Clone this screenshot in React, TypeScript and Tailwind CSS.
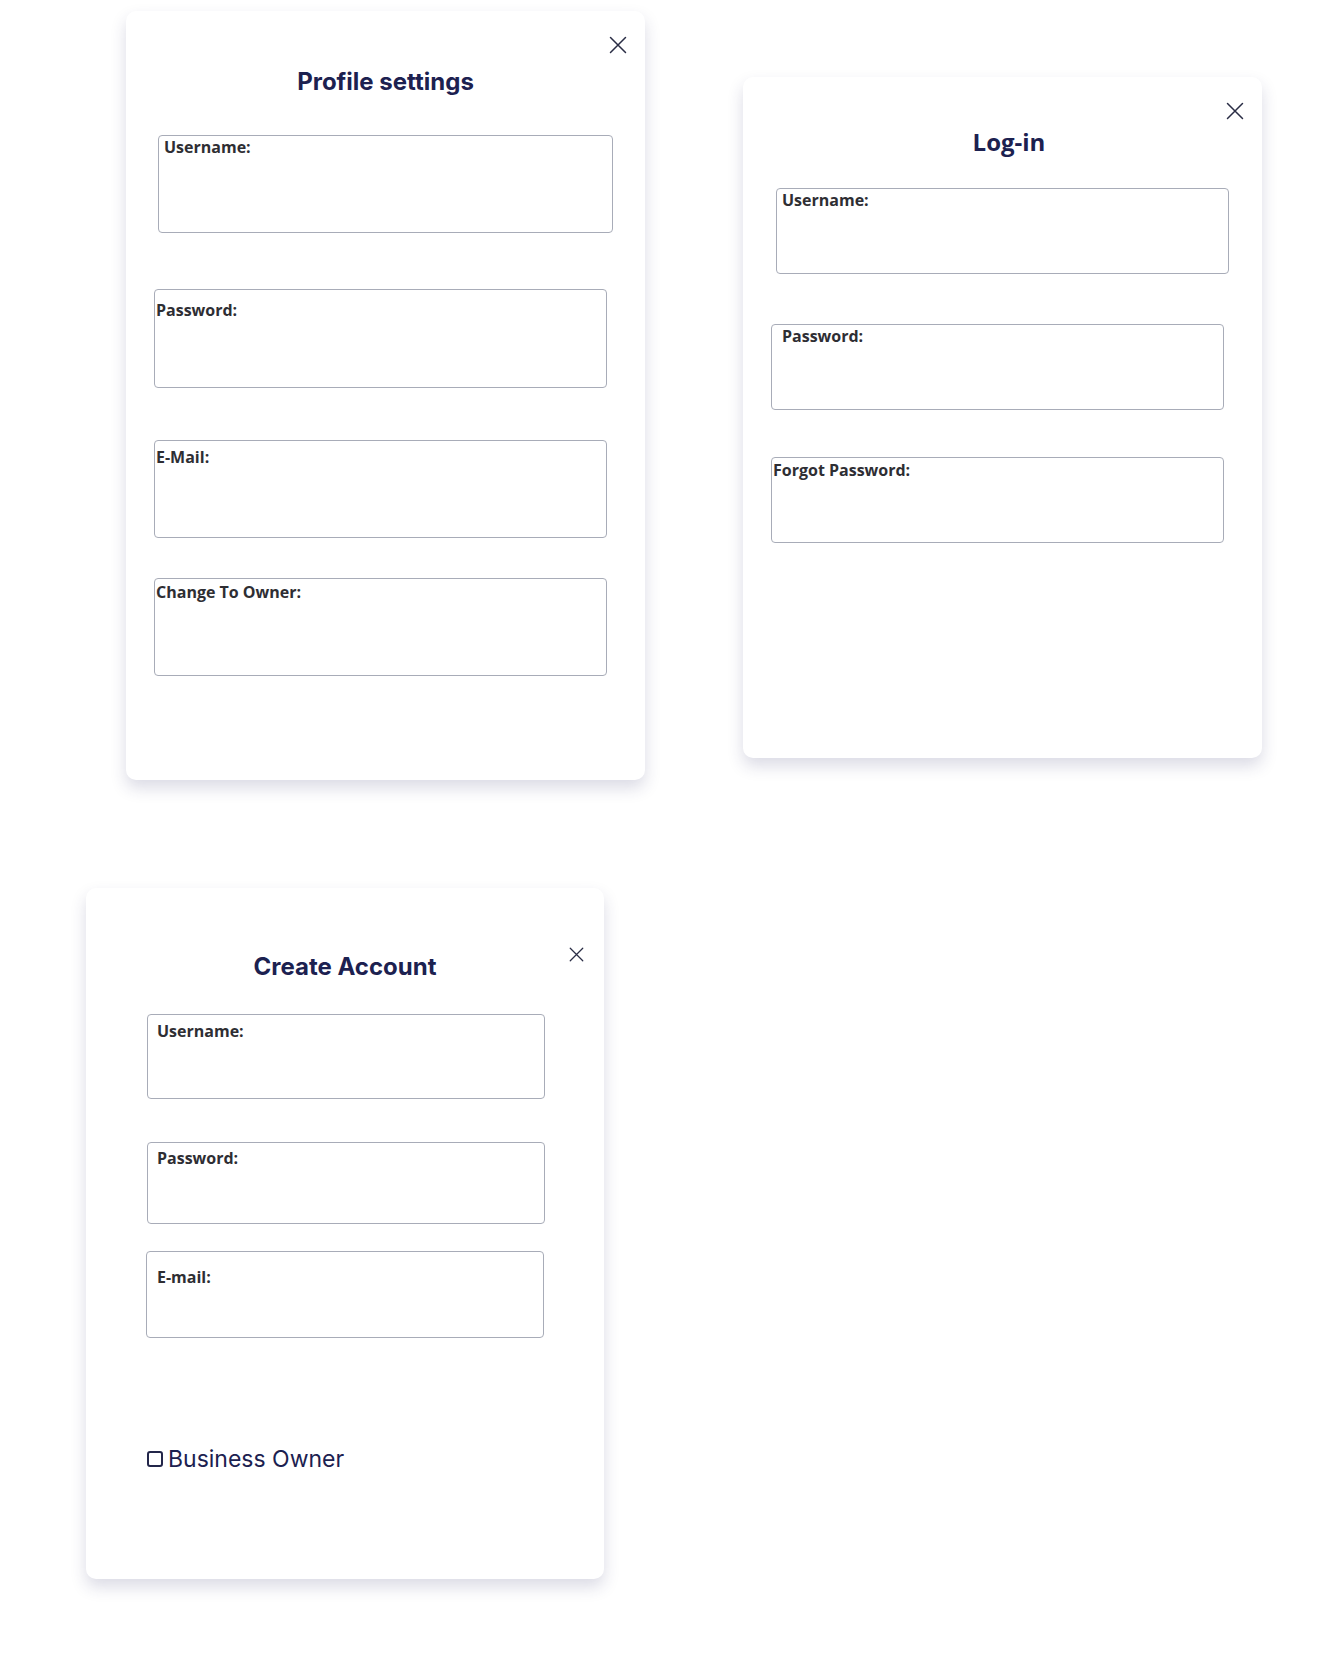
import React from 'react'

const TITLE = 'text-[24px] leading-8 font-bold text-[#1c2150] text-center'
const CARD = 'relative bg-white rounded-[10px] shadow-[0_8px_16px_rgba(40,40,100,0.17)]'

function CloseX({ size = 18 }: { size?: number }) {
  return (
    <svg width={size} height={size} viewBox="0 0 18 18" fill="none" stroke="#2a2d45" strokeWidth="1.5" strokeLinecap="round">
      <path d="M1.5 1.5L16.5 16.5M16.5 1.5L1.5 16.5" />
    </svg>
  )
}

function Field({ label, className, labelClass }: { label: string; className: string; labelClass: string }) {
  return (
    <div className={`border border-[#a8acb8] rounded-[4px] bg-white ${className}`}>
      <p className={`font-['Open_Sans',sans-serif] font-bold text-[16px] leading-5 text-[#2e2e33] ${labelClass}`}>{label}</p>
    </div>
  )
}

function ProfileSettings() {
  return (
    <div className={`${CARD} ml-[126px] mt-[11px] w-[519px] h-[769px] shrink-0 font-['Inter',sans-serif]`}>
      <button className="absolute left-[483px] top-[25px]"><CloseX /></button>
      <h2 className={`${TITLE} pt-[55px]`}>Profile settings</h2>
      <div className="flex flex-col pt-[37px]">
        <Field label="Username:" className="ml-[32px] w-[455px] h-[98px]" labelClass="pl-[5px] pt-[1px]" />
        <Field label="Password:" className="ml-[28px] mt-[56px] w-[453px] h-[99px]" labelClass="pl-[1px] pt-[10px]" />
        <Field label="E-Mail:" className="ml-[28px] mt-[52px] w-[453px] h-[98px]" labelClass="pl-[1px] pt-[6px]" />
        <Field label="Change To Owner:" className="ml-[28px] mt-[40px] w-[453px] h-[98px]" labelClass="pl-[1px] pt-[3px]" />
      </div>
    </div>
  )
}

function LogIn() {
  return (
    <div className={`${CARD} ml-[98px] mt-[77px] w-[519px] h-[681px] shrink-0`}>
      <button className="absolute left-[483px] top-[25px]"><CloseX /></button>
      <h2 className={`${TITLE} font-['Open_Sans',sans-serif] pt-[49px] pl-[13px]`}>Log-in</h2>
      <div className="flex flex-col pt-[30px]">
        <Field label="Username:" className="ml-[33px] w-[453px] h-[86px]" labelClass="pl-[5px] pt-[1px]" />
        <Field label="Password:" className="ml-[28px] mt-[50px] w-[453px] h-[86px]" labelClass="pl-[10px] pt-[1px]" />
        <Field label="Forgot Password:" className="ml-[28px] mt-[47px] w-[453px] h-[86px]" labelClass="pl-[1px] pt-[2px]" />
      </div>
    </div>
  )
}

function CreateAccount() {
  return (
    <div className={`${CARD} ml-[86px] mt-[108px] w-[518px] h-[691px] font-['Inter',sans-serif]`}>
      <button className="absolute left-[483px] top-[59px]"><CloseX size={15} /></button>
      <h2 className={`${TITLE} pt-[63px]`}>Create Account</h2>
      <div className="flex flex-col pt-[31px]">
        <Field label="Username:" className="ml-[61px] w-[398px] h-[85px]" labelClass="pl-[9px] pt-[6px]" />
        <Field label="Password:" className="ml-[61px] mt-[43px] w-[398px] h-[82px]" labelClass="pl-[9px] pt-[5px]" />
        <Field label="E-mail:" className="ml-[60px] mt-[27px] w-[398px] h-[87px]" labelClass="pl-[10px] pt-[15px]" />
      </div>
      <label className="flex items-center gap-[5px] ml-[61px] mt-[107px]">
        <span className="w-[16px] h-[16px] border-2 border-[#23264a] rounded-[3px] bg-white" />
        <span className="text-[23px] leading-7 text-[#1c2150]">Business Owner</span>
      </label>
    </div>
  )
}

export default function App() {
  return (
    <div className="w-[1327px] h-[1680px] bg-white">
      <div className="flex items-start">
        <ProfileSettings />
        <LogIn />
      </div>
      <CreateAccount />
    </div>
  )
}
